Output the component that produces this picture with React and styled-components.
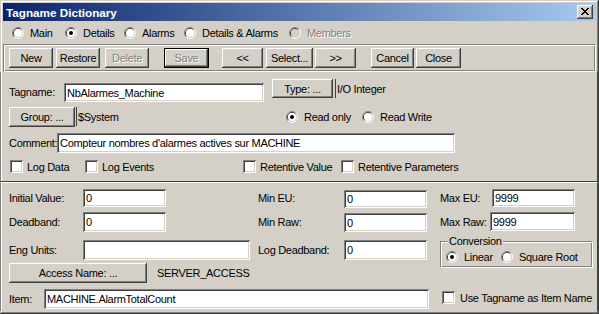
import React from 'react';
import styled, { createGlobalStyle, css } from 'styled-components';

const Global = createGlobalStyle`
  html, body { margin: 0; padding: 0; background: #D4D0C8; }
  body {
    font-family: "Liberation Sans", Arial, sans-serif;
    font-size: 11px;
    letter-spacing: -0.3px;
    color: #000;
  }
  * { box-sizing: border-box; }
`;

const raised = css`
  box-shadow: inset -1px -1px #404040, inset 1px 1px #fff, inset -2px -2px #808080, inset 2px 2px #D4D0C8;
`;
const sunken = css`
  box-shadow: inset 1px 1px #808080, inset -1px -1px #fff, inset 2px 2px #404040, inset -2px -2px #D4D0C8;
`;
const etched = css`
  border: 1px solid;
  border-color: #808080 #fff #fff #808080;
  box-shadow: inset 1px 1px #fff, inset -1px -1px #808080;
`;

const Window = styled.div`
  width: 599px;
  height: 314px;
  padding: 3px;
  background: #D4D0C8;
  box-shadow: inset -1px -1px #404040, inset 1px 1px #D4D0C8, inset -2px -2px #808080, inset 2px 2px #fff;
  display: flex;
  flex-direction: column;
  overflow: hidden;
`;

const TitleBar = styled.div`
  height: 18px;
  flex: none;
  display: flex;
  align-items: center;
  padding: 0 3px 0 3px;
  background: linear-gradient(to right, #0A246A, #A6CAF0);
`;

const Title = styled.div`
  color: #fff;
  font-weight: bold;
  font-size: 11.7px;
  letter-spacing: 0;
`;

const CloseButton = styled.div`
  margin-left: auto;
  width: 16px;
  height: 14px;
  background: #D4D0C8;
  ${raised};
  display: flex;
  align-items: center;
  justify-content: center;
  padding-bottom: 1px;
`;

const TabRow = styled.div`
  height: 23px;
  flex: none;
  display: flex;
  align-items: center;
  padding-left: 9px;
`;

const Item = styled.div`
  display: flex;
  align-items: center;
  gap: ${p => p.$gap ?? 6}px;
  flex: none;
  width: ${p => (p.$w ? `${p.$w}px` : 'auto')};
  margin-left: ${p => p.$ml || 0}px;
  margin-top: ${p => p.$mt || 0}px;
  height: ${p => (p.$h ? `${p.$h}px` : 'auto')};
  color: ${p => (p.$disabled ? '#808080' : '#000')};
  text-shadow: ${p => (p.$disabled ? '1px 1px #fff' : 'none')};
  white-space: nowrap;
`;

const Toolbar = styled.div`
  height: 28px;
  flex: none;
  ${etched};
  display: flex;
  align-items: flex-start;
  padding: 3px 0 0 5px;
`;

const Button = styled.div`
  flex: none;
  width: ${p => p.$w}px;
  height: ${p => p.$h || 20}px;
  margin-left: ${p => p.$ml || 0}px;
  margin-top: ${p => p.$mt || 0}px;
  background: #D4D0C8;
  display: flex;
  align-items: center;
  justify-content: center;
  white-space: nowrap;
  color: ${p => (p.$disabled ? '#808080' : '#000')};
  text-shadow: ${p => (p.$disabled ? '1px 1px #fff' : 'none')};
  ${raised};
  ${p => p.$default && css`
    box-shadow: inset 0 0 0 1px #000, inset -2px -2px #404040, inset 2px 2px #fff, inset -3px -3px #808080;
  `}
`;

const Panel = styled.div`
  flex: none;
  margin: 0 -2px 0 -3px;
  padding-left: 8px;
  border-left: 1px solid #808080;
  border-right: 1px solid #404040;
`;

const UpperPanel = styled(Panel)`
  height: 110px;
  border-bottom: 1px solid #404040;
  display: flex;
  flex-direction: column;
`;

const LowerPanel = styled(Panel)`
  flex: 1;
  border-top: 1px solid #fff;
  display: flex;
`;

const Column = styled.div`
  display: flex;
  flex-direction: column;
  flex: none;
  width: ${p => p.$w}px;
  margin-left: ${p => p.$ml || 0}px;
`;

const Row = styled.div`
  display: flex;
  align-items: flex-start;
  flex: none;
  height: ${p => p.$h}px;
  margin-top: ${p => p.$mt || 0}px;
`;

const Label = styled.div`
  flex: none;
  width: ${p => (p.$w ? `${p.$w}px` : 'auto')};
  height: ${p => p.$h || 20}px;
  margin-left: ${p => p.$ml || 0}px;
  margin-top: ${p => p.$mt || 0}px;
  display: flex;
  align-items: center;
  white-space: nowrap;
`;

const TextBox = styled.div`
  flex: none;
  width: ${p => p.$w}px;
  height: ${p => p.$h || 20}px;
  margin-left: ${p => p.$ml || 0}px;
  margin-top: ${p => p.$mt || 0}px;
  background: #fff;
  ${sunken};
  display: flex;
  align-items: center;
  padding: 0 3px 0 3px;
  white-space: nowrap;
  overflow: hidden;
`;

const StaticText = styled.div`
  flex: none;
  width: ${p => (p.$w ? `${p.$w}px` : 'auto')};
  height: ${p => p.$h || 19}px;
  margin-left: ${p => p.$ml || 0}px;
  margin-top: ${p => p.$mt || 0}px;
  border-left: ${p => (p.$bar ? '1px solid #404040' : 'none')};
  padding-left: ${p => (p.$bar ? 1 : 0)}px;
  display: flex;
  align-items: center;
  white-space: nowrap;
`;

const CheckBox = styled.span`
  display: inline-block;
  flex: none;
  width: 13px;
  height: 13px;
  background: #fff;
  ${sunken};
`;

const GroupBox = styled.div`
  width: ${p => p.$w}px;
  height: ${p => p.$h}px;
  margin-top: ${p => p.$mt || 0}px;
  ${etched};
  display: flex;
  flex-direction: column;
`;

const Caption = styled.div`
  align-self: flex-start;
  margin: -7px 0 0 7px;
  padding: 0 1px;
  background: #D4D0C8;
  line-height: 13px;
`;

const GroupRow = styled.div`
  display: flex;
  align-items: center;
  height: 14px;
  margin-top: 2px;
  padding-left: 5px;
`;

function Radio({ checked, disabled }) {
  return (
    <svg width="12" height="12" viewBox="0 0 12 12" style={{ flex: 'none' }}>
      <path d="M9.89 2.11A5.5 5.5 0 0 0 2.11 9.89" fill="none" stroke="#808080" />
      <path d="M2.11 9.89A5.5 5.5 0 0 0 9.89 2.11" fill="none" stroke="#fff" />
      <path d="M9.18 2.82A4.5 4.5 0 0 0 2.82 9.18" fill="none" stroke="#404040" />
      <path d="M2.82 9.18A4.5 4.5 0 0 0 9.18 2.82" fill="none" stroke="#D4D0C8" />
      <circle cx="6" cy="6" r="4" fill={disabled ? '#D4D0C8' : '#fff'} />
      {checked && <circle cx="6" cy="6" r="2" fill="#000" />}
    </svg>
  );
}

function CloseGlyph() {
  return (
    <svg width="8" height="7" viewBox="0 0 8 7" shapeRendering="crispEdges">
      <path
        fill="#000"
        d="M0 0h2v1H0zM6 0h2v1H6zM1 1h2v1H1zM5 1h2v1H5zM2 2h4v1H2zM3 3h2v1H3zM2 4h4v1H2zM1 5h2v1H1zM5 5h2v1H5zM0 6h2v1H0zM6 6h2v1H6z"
      />
    </svg>
  );
}

export default function App() {
  return (
    <>
      <Global />
      <Window>
        <TitleBar>
          <Title>Tagname Dictionary</Title>
          <CloseButton><CloseGlyph /></CloseButton>
        </TitleBar>

        <TabRow>
          <Item $w={53}><Radio />Main</Item>
          <Item $w={59}><Radio checked />Details</Item>
          <Item $w={60}><Radio />Alarms</Item>
          <Item $w={105}><Radio />Details &amp; Alarms</Item>
          <Item $disabled><Radio disabled />Members</Item>
        </TabRow>

        <Toolbar>
          <Button $w={44}>New</Button>
          <Button $w={44} $ml={3}>Restore</Button>
          <Button $w={44} $ml={5} $disabled>Delete</Button>
          <Button $w={45} $ml={15} $disabled $default>Save</Button>
          <Button $w={41} $ml={13}>&lt;&lt;</Button>
          <Button $w={47} $ml={3}>Select...</Button>
          <Button $w={41} $ml={2}>&gt;&gt;</Button>
          <Button $w={43} $ml={15}>Cancel</Button>
          <Button $w={45} $ml={2}>Close</Button>
        </Toolbar>

        <UpperPanel>
          <Row $h={24} $mt={7}>
            <Label $w={55} $mt={3}>Tagname:</Label>
            <TextBox $w={200} $h={19} $mt={4}>NbAlarmes_Machine</TextBox>
            <Button $w={61} $h={19} $ml={8}>Type: ...</Button>
            <StaticText $ml={2} $bar>I/O Integer</StaticText>
          </Row>
          <Row $h={20} $mt={4}>
            <Button $w={66}>Group: ...</Button>
            <StaticText $w={210} $ml={1} $h={19} $bar>$System</StaticText>
            <Item $w={76} $h={20}><Radio checked />Read only</Item>
            <Item $h={20}><Radio />Read Write</Item>
          </Row>
          <Row $h={20} $mt={6}>
            <Label $w={48}>Comment:</Label>
            <TextBox $w={398}>Compteur nombres d'alarmes actives sur MACHINE</TextBox>
          </Row>
          <Row $h={13} $mt={7}>
            <Item $w={75} $ml={1} $gap={4} $h={13}><CheckBox />Log Data</Item>
            <Item $w={158} $gap={4} $h={13}><CheckBox />Log Events</Item>
            <Item $w={98} $gap={4} $h={13}><CheckBox />Retentive Value</Item>
            <Item $gap={4} $h={13}><CheckBox />Retentive Parameters</Item>
          </Row>
        </UpperPanel>

        <LowerPanel>
          <Column $w={421}>
            <Row $h={18} $mt={6}>
              <Label $w={74} $h={18}>Initial Value:</Label>
              <TextBox $w={83} $h={18}>0</TextBox>
              <Label $w={86} $h={18} $ml={92}>Min EU:</Label>
              <TextBox $w={83} $h={18} $mt={1}>0</TextBox>
            </Row>
            <Row $h={20} $mt={5}>
              <Label $w={74}>Deadband:</Label>
              <TextBox $w={83}>0</TextBox>
              <Label $w={86} $ml={92}>Min Raw:</Label>
              <TextBox $w={83} $h={19} $mt={1}>0</TextBox>
            </Row>
            <Row $h={20} $mt={8}>
              <Label $w={74}>Eng Units:</Label>
              <TextBox $w={167}></TextBox>
              <Label $w={86} $ml={8}>Log Deadband:</Label>
              <TextBox $w={83}>0</TextBox>
            </Row>
            <Row $h={20} $mt={3}>
              <Button $w={138}>Access Name: ...</Button>
              <StaticText $ml={10} $h={20}>SERVER_ACCESS</StaticText>
            </Row>
            <Row $h={20} $mt={6}>
              <Label $w={35}>Item:</Label>
              <TextBox $w={385}>MACHINE.AlarmTotalCount</TextBox>
            </Row>
          </Column>
          <Column $w={155} $ml={10}>
            <Row $h={18} $mt={6}>
              <Label $w={52} $h={18}>Max EU:</Label>
              <TextBox $w={83} $h={18}>9999</TextBox>
            </Row>
            <Row $h={20} $mt={5}>
              <Label $w={50} $h={19}>Max Raw:</Label>
              <TextBox $w={85} $h={19}>9999</TextBox>
            </Row>
            <GroupBox $w={153} $h={27} $mt={9}>
              <Caption>Conversion</Caption>
              <GroupRow>
                <Item $w={55} $gap={6}><Radio checked />Linear</Item>
                <Item $gap={6}><Radio />Square Root</Item>
              </GroupRow>
            </GroupBox>
            <Row $h={13} $mt={23}>
              <Item $ml={2} $gap={5} $h={13}><CheckBox />Use Tagname as Item Name</Item>
            </Row>
          </Column>
        </LowerPanel>
      </Window>
    </>
  );
}
